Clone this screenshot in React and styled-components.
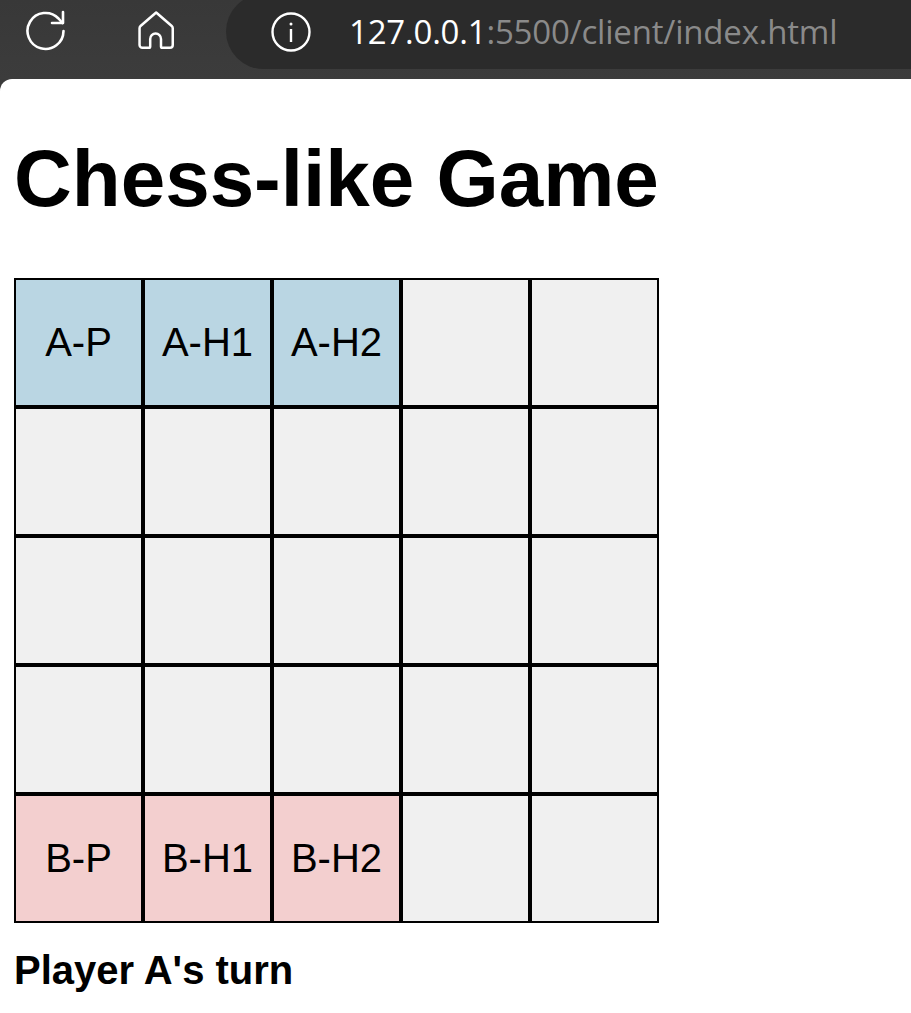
import React from "react";
import styled, { createGlobalStyle } from "styled-components";

const Global = createGlobalStyle`
  html, body { margin: 0; padding: 0; background: #3b3b3b; }
  body { font-family: "Liberation Sans", Arial, sans-serif; color: #000; overflow: hidden; }
`;
const Window = styled.div`
  width: 911px; height: 1013px; display: flex; flex-direction: column; background: #3b3b3b; overflow: hidden;
`;
const Toolbar = styled.header`
  height: 79px; flex: none; display: flex; align-items: flex-start;
  background: linear-gradient(180deg, #383838, #3c3c3c);
`;
const IconSlot = styled.div`
  width: ${(p) => p.$w}px; height: 62px; display: flex; align-items: center; justify-content: center; flex: none; color: #fff;
`;
const AddressBar = styled.div`
  flex: 1; height: 75px; margin: -6px 0 0 ${(p) => p.$ml}px; display: flex; align-items: center; color: #fff;
  background: #2b2b2b; border-radius: 38px 0 0 38px; padding-left: 44px;
`;
const Url = styled.div`
  margin-left: 37px; font-family: "Open Sans", "Noto Sans", sans-serif; font-size: 33px; letter-spacing: -0.2px; color: #8a8a8a; white-space: nowrap;
`;
const Host = styled.span` color: #fff; `;
const Page = styled.main`
  flex: 1; background: #fff; border-top-left-radius: 12px; padding: 0 14px;
`;
const Title = styled.h1`
  margin: 56px 0 0; font-size: 80px; line-height: 88px; font-weight: 700;
`;
const Board = styled.div`
  margin-top: 55px; display: grid; grid-template-columns: repeat(5, 129px); grid-auto-rows: 129px; width: 645px;
`;
const Cell = styled.div`
  box-sizing: border-box; border: 2px solid #000; display: flex; align-items: center; justify-content: center;
  font-size: 40px; background: ${(p) => (p.$side === "a" ? "#bad6e3" : p.$side === "b" ? "#f3cfcf" : "#f0f0f0")};
`;
const Status = styled.p`
  margin: 25px 0 0; font-size: 40px; line-height: 44px; font-weight: 700;
`;

const cells = [
  ["A-P", "a"], ["A-H1", "a"], ["A-H2", "a"], ["", ""], ["", ""],
  ...Array.from({ length: 15 }, () => ["", ""]),
  ["B-P", "b"], ["B-H1", "b"], ["B-H2", "b"], ["", ""], ["", ""],
];

const Reload = () => (
  <svg width="42" height="42" viewBox="0 0 42 42" fill="none" stroke="currentColor" strokeWidth="2.6" strokeLinecap="round" strokeLinejoin="round">
    <path d="M38.5 21A18 18 0 1 1 33.5 8.5L37.5 13" />
    <path d="M38 2v11H27" />
  </svg>
);
const Home = () => (
  <svg width="40" height="40" viewBox="0 0 40 40" fill="none" stroke="currentColor" strokeWidth="2.5" strokeLinejoin="round">
    <path d="M20.150 1.500 35.750 15a3 3 0 0 1 1 2.300V33.900a2.800 2.800 0 0 1-2.800 2.800H26.300a1.300 1.300 0 0 1-1.300-1.300V27.900a5.400 5.400 0 0 0-10.800 0V35.400a1.300 1.300 0 0 1-1.300 1.300H6.350a2.800 2.800 0 0 1-2.800-2.800V17.300a3 3 0 0 1 1-2.300Z" />
  </svg>
);
const Info = () => (
  <svg width="42" height="42" viewBox="0 0 42 42" fill="none" stroke="currentColor" strokeWidth="2.4">
    <circle cx="21" cy="21" r="18.500" />
    <path d="M21 18v13" />
    <circle cx="21" cy="13" r="1.500" fill="currentColor" stroke="none" />
  </svg>
);

export default function App() {
  return (
    <Window>
      <Global />
      <Toolbar>
        <IconSlot $w={92}><Reload /></IconSlot>
        <IconSlot $w={128}><Home /></IconSlot>
        <AddressBar $ml={6}>
          <Info />
          <Url><Host>127.0.0.1</Host>:5500/client/index.html</Url>
        </AddressBar>
      </Toolbar>
      <Page>
        <Title>Chess-like Game</Title>
        <Board>
          {cells.map(([label, side], i) => (
            <Cell key={i} $side={side}>{label}</Cell>
          ))}
        </Board>
        <Status>Player A's turn</Status>
      </Page>
    </Window>
  );
}
